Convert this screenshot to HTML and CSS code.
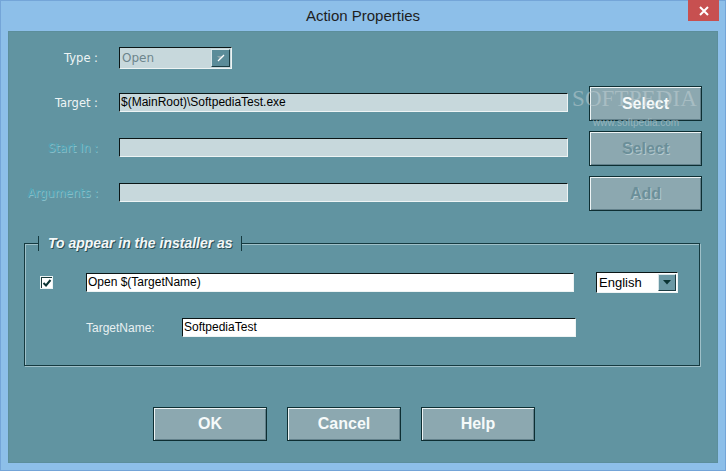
FILE: index.html
```html
<!DOCTYPE html>
<html>
<head>
<meta charset="utf-8">
<title>Action Properties</title>
<link rel="stylesheet" href="styles.css">
</head>
<body>
<div class="window">
  <div class="titlebar">
    <span class="title">Action Properties</span>
    <div class="close">
      <svg width="10" height="10" viewBox="0 0 10 10"><path d="M1 1 L9 9 M9 1 L1 9" stroke="#fff" stroke-width="2" fill="none"/></svg>
    </div>
  </div>
  <div class="client">
    <div class="form">
      <div class="lbl">Type :</div>
      <div class="combo type-combo">
        <span class="combo-text">Open</span>
        <span class="drop drop-disabled">
          <svg width="17" height="16" viewBox="0 0 17 16"><path d="M5 6 L12 6 L8.5 9.5 Z" fill="#8fa8ae"/><path d="M6 11 L12 5" stroke="#ffffff" stroke-width="1.3" fill="none"/></svg>
        </span>
      </div>
      <div></div>

      <div class="lbl">Target :</div>
      <div class="field">$(MainRoot)\SoftpediaTest.exe</div>
      <div class="btn side-btn">Select</div>

      <div class="lbl lbl-disabled">Start In :</div>
      <div class="field"></div>
      <div class="btn side-btn btn-disabled">Select</div>

      <div class="lbl lbl-disabled">Arguments :</div>
      <div class="field"></div>
      <div class="btn side-btn btn-disabled">Add</div>
    </div>

    <div class="group">
      <div class="legend">To appear in the installer as</div>
      <div class="grow grow-first">
        <span class="check">
          <svg width="10" height="10" viewBox="0 0 10 10"><path d="M1.5 5 L4 7.5 L8.5 2" stroke="#0c3434" stroke-width="2" fill="none"/></svg>
        </span>
        <div class="field white name-field">Open $(TargetName)</div>
        <div class="combo lang-combo">
          <span class="combo-text">English</span>
          <span class="drop drop-lang">
            <svg width="16" height="15" viewBox="0 0 16 15"><path d="M4 5 L12 5 L8 9.5 Z" fill="#0a3333"/></svg>
          </span>
        </div>
      </div>
      <div class="grow grow-second">
        <span class="tn-label">TargetName:</span>
        <div class="field white tn-field">SoftpediaTest</div>
      </div>
    </div>

    <div class="actions">
      <div class="btn big-btn">OK</div>
      <div class="btn big-btn">Cancel</div>
      <div class="btn big-btn">Help</div>
    </div>

    <div class="watermark">
      <span class="wm-big">SOFTPEDIA</span>
      <span class="wm-small">www.softpedia.com</span>
    </div>
  </div>
</div>
</body>
</html>
```

FILE: styles.css
```css
html, body {
  margin: 0;
  padding: 0;
}
body {
  width: 726px;
  height: 471px;
  overflow: hidden;
  font-family: "Liberation Sans", Arial, sans-serif;
}
.window {
  width: 726px;
  height: 471px;
  box-sizing: border-box;
  background: #8dbfe9;
  border: 1px solid #74a5d8;
  display: flex;
  flex-direction: column;
}
.titlebar {
  height: 30px;
  position: relative;
  display: flex;
  align-items: center;
  justify-content: center;
  flex: none;
}
.title {
  font-family: "Liberation Sans", Arial, sans-serif;
  font-size: 15px;
  color: #1e1e1e;
  margin-top: -2px;
}
.close {
  position: absolute;
  right: 6px;
  top: -1px;
  width: 31px;
  height: 21px;
  background: #c75050;
  display: flex;
  align-items: center;
  justify-content: center;
}
.client {
  flex: 1;
  margin: 0 7px 7px 7px;
  background: #6194a1;
  border: 1px solid #5c8e9b;
  position: relative;
  display: flex;
  flex-direction: column;
}
.form {
  display: grid;
  grid-template-columns: 89px 450px 113px;
  grid-template-rows: 35px 35px 35px 35px;
  column-gap: 20px;
  row-gap: 10px;
  padding-top: 9px;
}
.form .field, .form .combo { margin-left: 1px; }
.form .side-btn { margin-left: 1px; }
.lbl {
  align-self: center;
  text-align: right;
  font-family: "DejaVu Sans", Verdana, sans-serif;
  font-size: 11.5px;
  color: #eef4f5;
  margin-top: -1px;
}
.lbl-disabled {
  color: #52a2b2;
  text-shadow: 1px 1px 0 #88bec9;
}
.field {
  margin-top: 7px;
  height: 19px;
  box-sizing: border-box;
  background: #c7d8dc;
  border-top: 1px solid #0b1616;
  border-left: 1px solid #0b1616;
  border-bottom: 1px solid #eef4f4;
  border-right: 1px solid #eef4f4;
  font-size: 12px;
  line-height: 17px;
  color: #000;
  padding-left: 1px;
  white-space: nowrap;
  overflow: hidden;
}
.field.white {
  background: #ffffff;
  margin-top: 0;
}
.combo {
  display: flex;
  align-items: stretch;
  box-sizing: border-box;
  border-top: 1px solid #0b1616;
  border-left: 1px solid #0b1616;
  border-bottom: 1px solid #eef4f4;
  border-right: 1px solid #eef4f4;
}
.type-combo {
  margin-top: 6px;
  width: 113px;
  height: 22px;
  background: #c7d8dc;
}
.type-combo .combo-text {
  flex: 1;
  font-family: "DejaVu Sans", Verdana, sans-serif;
  font-size: 12px;
  color: #6d858c;
  line-height: 20px;
  padding-left: 2px;
}
.drop {
  display: flex;
  align-items: center;
  justify-content: center;
  box-sizing: border-box;
}
.drop-disabled {
  width: 19px;
  margin: 1px 1px 1px 0;
  background: #5b8c99;
  border-top: 1px solid #d8e6e9;
  border-left: 1px solid #d8e6e9;
  border-bottom: 1px solid #1c3c42;
  border-right: 1px solid #1c3c42;
}
.btn {
  box-sizing: border-box;
  background: #8ca8b0;
  border: 1px solid #0d2e32;
  box-shadow: inset 1px 1px 0 #eef4f5, inset -1px -1px 0 #62808a;
  display: flex;
  align-items: center;
  justify-content: center;
  font-family: "Liberation Sans", Arial, sans-serif;
  font-weight: bold;
  font-size: 16px;
  color: #f6fafa;
}
.side-btn {
  width: 113px;
  height: 35px;
}
.btn-disabled {
  color: #6b8f99;
  text-shadow: 1px 1px 0 #b4c9ce;
}
.group {
  margin-top: 32px;
  margin-left: 15px;
  width: 676px;
  height: 123px;
  box-sizing: border-box;
  border: 1px solid #153a40;
  box-shadow: 1px 1px 0 #9fc0c8, inset 1px 1px 0 #9fc0c8;
  display: flex;
  flex-direction: column;
  align-items: flex-start;
}
.legend {
  margin-top: -8px;
  margin-left: 13px;
  height: 15px;
  padding: 0 8px 0 9px;
  background: #6194a1;
  border-left: 1px solid #153a40;
  border-right: 1px solid #153a40;
  font-family: "Liberation Sans", Arial, sans-serif;
  font-size: 14px;
  font-weight: bold;
  font-style: italic;
  line-height: 15px;
  color: #f4f8f8;
  text-shadow: 1px 1px 0 #2b4d54;
  white-space: nowrap;
}
.grow {
  display: flex;
  align-items: center;
}
.grow-first {
  margin-top: 21px;
  height: 21px;
}
.check {
  margin-left: 15px;
  width: 13px;
  height: 13px;
  box-sizing: border-box;
  background: #ffffff;
  border: 1px solid #eaf2f3;
  box-shadow: inset 1px 1px 0 #1a3a3a;
  display: flex;
  align-items: center;
  justify-content: center;
}
.name-field {
  margin-left: 33px;
  width: 488px;
}
.lang-combo {
  margin-left: 22px;
  width: 82px;
  height: 21px;
  background: #ffffff;
}
.lang-combo .combo-text {
  flex: 1;
  font-size: 13px;
  line-height: 19px;
  color: #000;
  padding-left: 2px;
}
.drop-lang {
  width: 18px;
  margin: 1px 1px 1px 0;
  background: #6a98a4;
  border-top: 1px solid #d8e6e9;
  border-left: 1px solid #d8e6e9;
  border-bottom: 1px solid #1c3c42;
  border-right: 1px solid #1c3c42;
}
.grow-second {
  margin-top: 25px;
  height: 19px;
}
.tn-label {
  margin-left: 61px;
  width: 96px;
  font-size: 12px;
  color: #e8f0f1;
}
.tn-field {
  width: 394px;
}
.actions {
  display: flex;
  gap: 20px;
  margin-top: 41px;
  margin-left: 144px;
}
.big-btn {
  width: 114px;
  height: 34px;
}
.watermark {
  position: absolute;
  left: 563px;
  top: 54px;
  width: 140px;
  display: flex;
  flex-direction: column;
  align-items: flex-start;
  pointer-events: none;
}
.wm-big {
  font-family: "Liberation Serif", "Times New Roman", serif;
  font-size: 23px;
  line-height: 26px;
  color: rgba(196, 210, 214, 0.5);
  letter-spacing: 0.1px;
}
.wm-small {
  margin-left: 21px;
  margin-top: 6px;
  font-family: "Liberation Sans", Arial, sans-serif;
  font-size: 10px;
  line-height: 10px;
  color: rgba(176, 196, 202, 0.7);
}
```
